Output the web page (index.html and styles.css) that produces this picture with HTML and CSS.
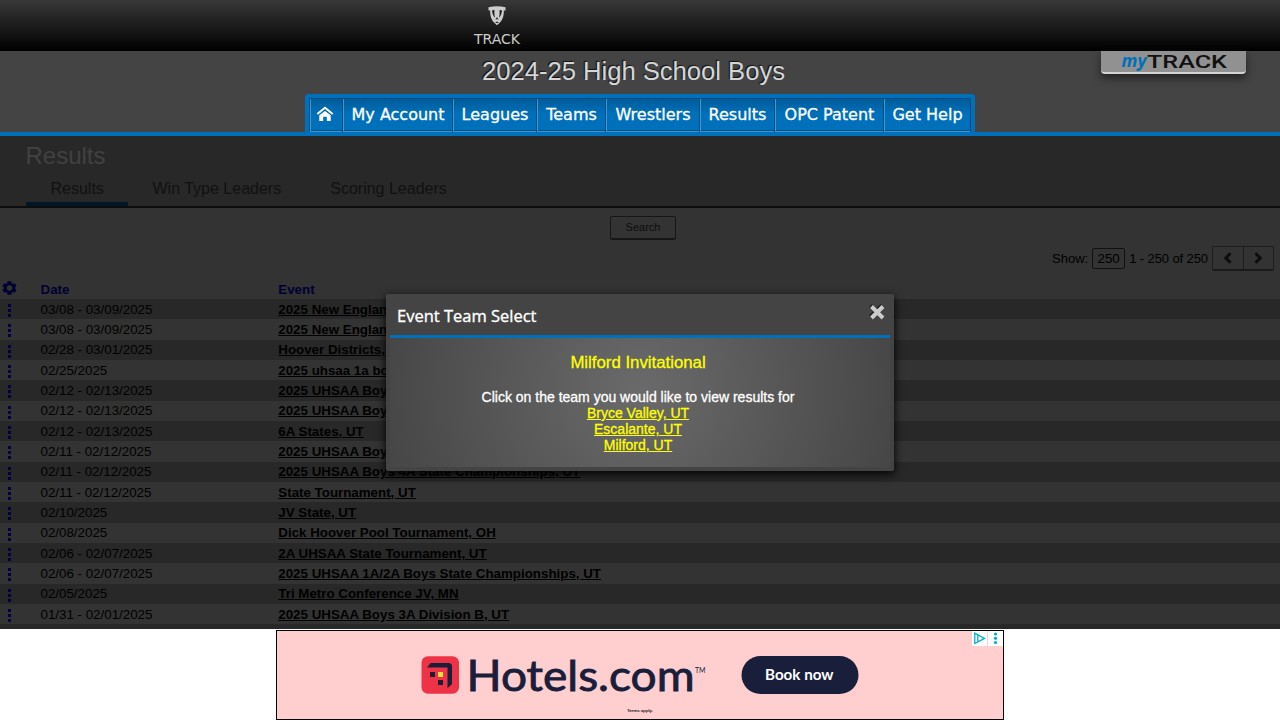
FILE: index.html
```
<!DOCTYPE html>
<html lang="en">
<head>
<meta charset="utf-8">
<title>Results</title>
<link rel="stylesheet" href="styles.css">
</head>
<body>
<header class="topbar">
  <div class="brand">
    <svg class="shield" width="18" height="20" viewBox="0 0 18 20" fill="#ccc"><path d="M0.5 1.2Q9-.9 17.5 1.2V4.6L15.8 4.4C16 9 15 14 11.2 17.2L9 19.3 6.800 17.2C3 14 2 9 2.2 4.400L.5 4.600Z"/><path d="M4.200 4.300L6.400 4V8.600L7 11.800C5.200 10 4.200 7.200 4.200 4.300ZM13.800 4.300L11.600 4V8.600L11 11.800C12.800 10 13.800 7.200 13.800 4.300ZM9 11L10.600 14 9 13 7.400 14ZM7 16.600L9 15.600 11 16.600 9 17Z" fill="#191919"/></svg>
    <span>TRACK</span>
  </div>
</header>
<section class="masthead">
  <h1 class="season">2024-25 High School Boys</h1>
  <nav class="nav">
    <a class="home"><svg width="18" height="16" viewBox="0 0 18 16"><path d="M1.300 8L9 1.800 16.700 8" fill="none" stroke="#fff" stroke-width="1.900"/><path d="M3.300 9.300L9 4.900 14.700 9.300V15H10.800V10.800H7.200V15H3.300Z" fill="#fff"/></svg></a>
    <a class="n1">My Account</a><a class="n2">Leagues</a><a class="n3">Teams</a><a class="n4">Wrestlers</a><a class="n5">Results</a><a class="n6">OPC Patent</a><a class="n7">Get Help</a>
  </nav>
  <div class="mytrack">
    <svg width="145" height="23" viewBox="0 0 145 23"><text class="my" x="20.500" y="16.300" textLength="25" lengthAdjust="spacingAndGlyphs">my</text><text class="track" x="46" y="16.500" textLength="80" lengthAdjust="spacingAndGlyphs">TRACK</text></svg>
  </div>
</section>
<main class="page">
  <div class="pagehead">
    <h2>Results</h2>
    <div class="tabs"><a class="tab active">Results</a><a class="tab">Win Type Leaders</a><a class="tab">Scoring Leaders</a></div>
  </div>
  <div class="searchrow"><button class="search">Search</button></div>
  <div class="pager">
    <span>Show:</span><span class="count">250</span><span class="range">1 - 250 of 250</span>
    <span class="arrows">
      <span class="arrow"><svg width="10" height="12" viewBox="0 0 10 12"><path d="M7.5 1.3L2.8 6l4.7 4.7"/></svg></span>
      <span class="arrow"><svg width="10" height="12" viewBox="0 0 10 12"><path d="M2.5 1.3L7.2 6l-4.7 4.7"/></svg></span>
    </span>
  </div>
  <div class="row head">
    <svg class="gear" width="15" height="14" viewBox="0 0 15 14"><path fill-rule="evenodd" d="M5.6 .3H9.4L9.8 2.2 11 2.9 12.8 2.2 14.5 5.2 13 6.5V7.5L14.5 8.8 12.8 11.8 11 11.1 9.8 11.8 9.4 13.7H5.6L5.2 11.8 4 11.1 2.2 11.8.5 8.8 2 7.5V6.5L.5 5.2 2.2 2.2 4 2.9 5.2 2.2ZM7.5 4.3A2.7 2.7 0 1 0 7.5 9.7 2.7 2.7 0 1 0 7.5 4.3Z"/></svg><span>Date</span><span>Event</span>
  </div>
  <div class="list">
    <div class="row"><i class="dots"></i><span>03/08 - 03/09/2025</span><a>2025 New England</a></div>
    <div class="row"><i class="dots"></i><span>03/08 - 03/09/2025</span><a>2025 New England</a></div>
    <div class="row"><i class="dots"></i><span>02/28 - 03/01/2025</span><a>Hoover Districts, OH</a></div>
    <div class="row"><i class="dots"></i><span>02/25/2025</span><a>2025 uhsaa 1a boys</a></div>
    <div class="row"><i class="dots"></i><span>02/12 - 02/13/2025</span><a>2025 UHSAA Boys</a></div>
    <div class="row"><i class="dots"></i><span>02/12 - 02/13/2025</span><a>2025 UHSAA Boys</a></div>
    <div class="row"><i class="dots"></i><span>02/12 - 02/13/2025</span><a>6A States, UT</a></div>
    <div class="row"><i class="dots"></i><span>02/11 - 02/12/2025</span><a>2025 UHSAA Boys</a></div>
    <div class="row"><i class="dots"></i><span>02/11 - 02/12/2025</span><a>2025 UHSAA Boys 4A State Championships, UT</a></div>
    <div class="row"><i class="dots"></i><span>02/11 - 02/12/2025</span><a>State Tournament, UT</a></div>
    <div class="row"><i class="dots"></i><span>02/10/2025</span><a>JV State, UT</a></div>
    <div class="row"><i class="dots"></i><span>02/08/2025</span><a>Dick Hoover Pool Tournament, OH</a></div>
    <div class="row"><i class="dots"></i><span>02/06 - 02/07/2025</span><a>2A UHSAA State Tournament, UT</a></div>
    <div class="row"><i class="dots"></i><span>02/06 - 02/07/2025</span><a>2025 UHSAA 1A/2A Boys State Championships, UT</a></div>
    <div class="row"><i class="dots"></i><span>02/05/2025</span><a>Tri Metro Conference JV, MN</a></div>
    <div class="row"><i class="dots"></i><span>01/31 - 02/01/2025</span><a>2025 UHSAA Boys 3A Division B, UT</a></div>
    <div class="row"></div>
  </div>
</main>
<aside class="ad">
  <svg width="726" height="88" viewBox="0 0 726 88">
    <rect x="144.500" y="25.200" width="37.500" height="37.500" rx="6.500" fill="#ef3346"/>
    <path d="M153.600 32H171.500Q175 32 175 35.500V53L170.500 57.200V36.500H150Z M153 41H158V46H153Z M161 49H166V54H161Z" fill="#191e3b"/>
    <rect x="161" y="41" width="5" height="5" fill="#fddb32"/>
    <text class="hotels" x="189.500" y="59.500" textLength="228" lengthAdjust="spacingAndGlyphs">Hotels.com</text>
    <text class="tm" x="418" y="41.500" textLength="10.500" lengthAdjust="spacingAndGlyphs">TM</text>
    <rect x="464.500" y="25" width="117" height="38" rx="19" fill="#191e3b"/>
    <text class="book" x="488" y="49" textLength="68.500" lengthAdjust="spacingAndGlyphs">Book now</text>
    <text class="terms" x="350" y="80.500" textLength="26" lengthAdjust="spacingAndGlyphs">Terms apply.</text>
    <path d="M695 0H710V15H695ZM711 0H726V15H711Z" fill="#fff"/>
    <path d="M697.800 2.200V12.500L707.500 7.400ZM700.800 4V11" fill="none" stroke="#00aecd" stroke-width="1.300"/>
    <circle cx="718.500" cy="3" r="1.600" fill="#00aecd"/><circle cx="718.500" cy="7.300" r="1.600" fill="#00aecd"/><circle cx="718.500" cy="11.500" r="1.600" fill="#00aecd"/>
  </svg>
</aside>
<div class="modal">
  <div class="modalhead">
    <svg width="145" height="24" viewBox="0 0 145 24"><text class="mtitle" x="0" y="17" textLength="139.500" lengthAdjust="spacingAndGlyphs">Event Team Select</text></svg>
    <svg class="close" width="17" height="17" viewBox="0 0 17 17"><path d="M1.500 1.500L13 13M13 1.500L1.500 13" stroke="#222" stroke-width="4"/><path d="M2.500 2.500L14 14M14 2.500L2.500 14" stroke="#ccc" stroke-width="4"/></svg>
  </div>
  <div class="modalbody">
    <p class="event">Milford Invitational</p>
    <p>Click on the team you would like to view results for</p>
    <a>Bryce Valley, UT</a><a>Escalante, UT</a><a>Milford, UT</a>
  </div>
</div>
</body>
</html>
```
FILE: styles.css
```
* { box-sizing: border-box; }
body {
  margin: 0;
  width: 1280px;
  height: 720px;
  overflow: hidden;
  display: flex;
  flex-direction: column;
  background: #fff;
  font: 13.33px "Liberation Sans", Arial, sans-serif;
}
h1, h2, p { margin: 0; font-weight: normal; }
.topbar { height: 51px; background: linear-gradient(#383838, #000); }
.brand {
  width: 60px;
  margin-left: 467px;
  padding-top: 6px;
  display: flex;
  flex-direction: column;
  align-items: center;
  gap: 6px;
  color: #ccc;
  font: 14px/14px "DejaVu Sans", Verdana, sans-serif;
}
.masthead {
  position: relative;
  height: 85px;
  background: #444;
  border-bottom: 4px solid #0070bb;
  display: flex;
  flex-direction: column;
  align-items: center;
}
.season {
  height: 43px;
  padding-right: 13px;
  line-height: 41px;
  font-size: 25.6px;
  color: #d6d6d6;
  text-shadow: -1px -1px 1px #111;
  white-space: nowrap;
}
.nav {
  width: 670px;
  height: 38px;
  border: 4px solid #0070bb;
  border-bottom-width: 0;
  border-radius: 4px 4px 0 0;
  display: flex;
  color: #fff;
  font: 16px "DejaVu Sans", Verdana, sans-serif;
  -webkit-text-stroke: .3px #fff;
}
.nav a {
  height: 34px;
  padding: 0 0 2px 1px;
  display: flex;
  align-items: center;
  justify-content: center;
  white-space: nowrap;
  background: linear-gradient(#005c99, #0070bb 45%);
  border: solid #004d82;
  border-width: 1px 1px 0 0;
  box-shadow: inset 1px -1px #4096cf, inset 0 -2px #005488;
}
.nav .home { width: 34px; padding: 0 2px 3px 0; border-left-width: 1px; }
.n1 { width: 110px; }
.n2 { width: 84px; }
.n3 { width: 69px; }
.n4 { width: 94px; }
.n5 { width: 75px; }
.n6 { width: 109px; }
.n7 { width: 87px; }
.mytrack {
  position: absolute;
  right: 34px;
  top: 0;
  width: 145px;
  height: 23px;
  background: #919191;
  border-bottom: 2px solid #d4d4d4;
  border-radius: 0 0 4px 4px;
  box-shadow: 0 4px 8px #222;
}
.mytrack svg { display: block; overflow: visible; }
.my { font: italic bold 17px "Open Sans", sans-serif; fill: #0070bb; }
.track { font: 500 18px "Roboto", sans-serif; fill: #111; }
.page { height: 493px; overflow: hidden; background: #333; color: #000; }
.pagehead { height: 72px; background: #282828; border-bottom: 2px solid #0d0d0d; padding-left: 26px; }
.pagehead h2 { height: 34px; margin-left: -.5px; font-size: 24px; line-height: 40px; color: #414141; }
.tabs { display: flex; height: 36px; }
.tab { height: 36px; padding: 0 24.6px 0 24.5px; font-size: 16px; line-height: 37px; color: #111; }
.active { width: 102px; border-bottom: 4px solid #001727; }
.searchrow { display: flex; justify-content: center; padding: 8px 0 0 6px; height: 37px; }
.search {
  width: 66px;
  height: 24px;
  padding: 0 6px 2px;
  border: 1px solid #161616;
  border-bottom-width: 2px;
  border-radius: 2px;
  background: #333;
  color: #0d0d0d;
  font: 11px "Liberation Sans", sans-serif;
}
.pager { height: 27px; padding-right: 6px; display: flex; justify-content: flex-end; align-items: center; gap: 4px; font-size: 13px; }
.range { letter-spacing: -.1px; }
.count { width: 33px; height: 21px; border: 1px solid #111; border-radius: 2px; text-align: center; line-height: 19px; font-size: 13.33px; }
.arrows { display: flex; width: 62px; height: 25px; border: 1px solid #1d1d1d; border-bottom: 2px solid #1b1b1b; border-radius: 2px; }
.arrow { flex: 1; display: flex; align-items: center; justify-content: center; }
.arrow + .arrow { border-left: 1px solid #1d1d1d; }
.arrow path { fill: none; stroke: #0d0d0d; stroke-width: 3; }
.row { display: grid; grid-template-columns: 40.5px 237.8px 1fr; height: 20.33px; align-items: center; white-space: nowrap; }
.row.head { height: 27px; padding-top: 7px; color: #000033; font-weight: bold; }
.gear { margin-left: 2px; margin-top: -3px; fill: #000033; }
.list .row:nth-child(odd) { background: #282828; }
.row a { font-weight: bold; text-decoration: underline; justify-self: start; }
.dots {
  width: 3px;
  height: 13px;
  margin: 3px 0 0 8px;
  background: repeating-linear-gradient(#000042 0 3px, transparent 3px 5px);
}
.ad { width: 728px; height: 90px; margin: 1px auto 0; background: #ffcfd0; border: 1px solid #000; }
.ad svg { display: block; }
.hotels { font: 400 43px "Lato", sans-serif; fill: #191e3b; stroke: #191e3b; stroke-width: .9px; }
.tm { font: 7px "Lato", sans-serif; fill: #191e3b; }
.book { font: 700 15px "Lato", sans-serif; fill: #fff; }
.terms { font: 4.500px "Lato", sans-serif; fill: #111; stroke: #111; stroke-width: .1px; }
.modal {
  position: absolute;
  left: 386px;
  top: 294px;
  width: 508px;
  height: 177px;
  padding: 0 4px 4px;
  background: #444;
  border-radius: 2px;
  box-shadow: 0 3px 10px #000;
}
.modalhead { height: 44px; border-bottom: 3px solid #0070bb; padding: 11px 4px 0 7px; display: flex; justify-content: space-between; }
.close { margin-top: -1px; }
.mtitle { font: 500 16px "Open Sans", sans-serif; fill: #fff; stroke: #fff; stroke-width: .35px; }
.modalbody {
  height: 129px;
  padding: 15px 4px 0 0;
  display: flex;
  flex-direction: column;
  align-items: center;
  background: radial-gradient(circle farthest-corner at 50% 40%, #6a6a6a, #464646);
  color: #fff;
  font-size: 14px;
  line-height: 16px;
  -webkit-text-stroke: .3px;
}
.modalbody a { color: #ff0; text-decoration: underline; }
.event { color: #ff0; font-size: 16.8px; line-height: 20px; margin-bottom: 16px; }
```
